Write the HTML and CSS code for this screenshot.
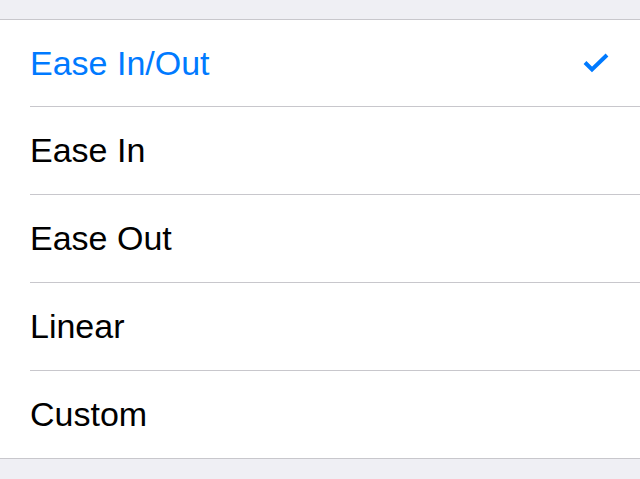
FILE: index.html
```html
<!DOCTYPE html>
<html>
<head>
<meta charset="utf-8">
<link rel="stylesheet" href="styles.css">
</head>
<body>
<div class="list">
  <div class="row selected"><span class="label">Ease In/Out</span>
    <svg class="check" width="26" height="20" viewBox="0 0 26 20"><polyline points="2,9.5 9,16.5 24,2" fill="none" stroke="#007aff" stroke-width="4" stroke-linejoin="miter"/></svg>
  </div>
  <div class="row"><span class="label">Ease In</span></div>
  <div class="row"><span class="label">Ease Out</span></div>
  <div class="row"><span class="label">Linear</span></div>
  <div class="row last"><span class="label">Custom</span></div>
</div>
</body>
</html>
```
FILE: styles.css
```css
html, body {
  margin: 0;
  padding: 0;
  background: #efeff4;
  font-family: "Liberation Sans", Arial, sans-serif;
}
body {
  padding-top: 19px;
  height: 479px;
  box-sizing: border-box;
  overflow: hidden;
}
.list {
  background: #fff;
  border-top: 1px solid #c8c7cc;
  border-bottom: 1px solid #c8c7cc;
}
.row {
  display: flex;
  align-items: center;
  justify-content: space-between;
  height: 87px;
  margin-left: 30px;
  padding-right: 31px;
  border-bottom: 1px solid #c8c7cc;
}
.row:first-child {
  height: 86px;
}
.row.last {
  border-bottom: none;
}
.label {
  font-size: 34px;
  color: #000;
}
.selected .label {
  color: #007aff;
}
.check {
  display: block;
}
```
